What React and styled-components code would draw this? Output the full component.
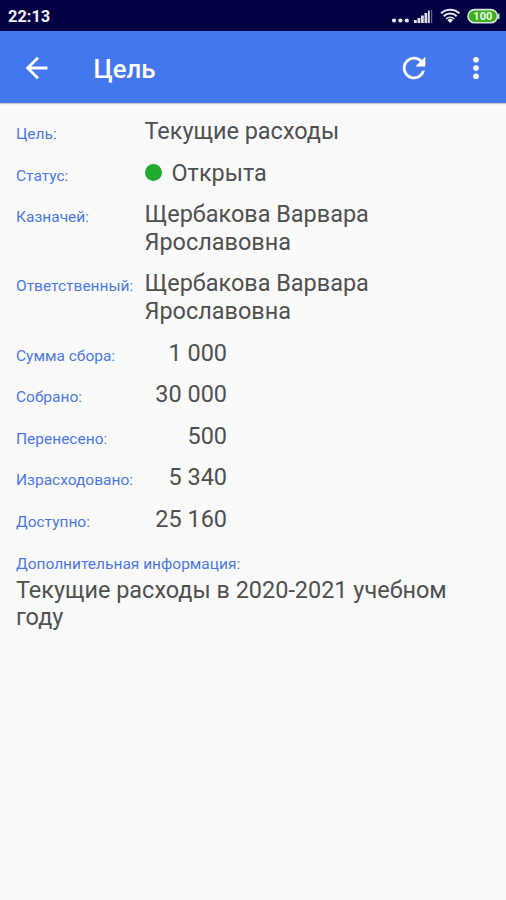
import React from 'react';
import styled, { createGlobalStyle } from 'styled-components';

const navy = '#000042';
const blue = '#4477ee';
const label = '#4a78ec';
const grey = '#505050';

const GlobalStyle = createGlobalStyle`
  body {
    margin: 0;
    background: #fafafa;
    font-family: Roboto, 'Noto Sans', sans-serif;
  }
`;

const Screen = styled.div`
  min-height: 900px;
  background: #fafafa;
`;

const StatusBar = styled.div`
  box-sizing: border-box;
  height: 31px;
  padding: 2px 6px 0 8px;
  display: flex;
  align-items: center;
  justify-content: space-between;
  background: ${navy};
`;

const Clock = styled.span`
  font-size: 16.4px;
  font-weight: 700;
  line-height: 20px;
  color: #f0f0f6;
`;

const StatusIcons = styled.svg`
  display: block;
  width: 110px;
  height: 20px;
`;

const Toolbar = styled.header`
  box-sizing: border-box;
  height: 72px;
  padding: 2px 13px 0 20px;
  display: flex;
  align-items: center;
  background: ${blue};
  box-shadow: 0 1px 1px rgba(0, 0, 0, 0.2);
`;

const Title = styled.h1`
  flex: 1;
  margin: 0 0 0 39.5px;
  padding-top: 1px;
  font-size: 25.8px;
  font-weight: 500;
  line-height: 32px;
  color: #ffffff;
`;

const IconButton = styled.button`
  width: 34px;
  height: 34px;
  margin-left: ${({ gap }) => gap || 0}px;
  padding: 0;
  border: 0;
  background: none;
  color: #ffffff;
  svg {
    display: block;
    width: 34px;
    height: 34px;
    fill: currentColor;
  }
`;

const Details = styled.main`
  padding: 15px 16px 0;
  display: flex;
  flex-direction: column;
  row-gap: 14.15px;
`;

const Row = styled.div`
  display: grid;
  grid-template-columns: 128.5px 1fr;
  align-items: baseline;
`;

const Label = styled.span`
  font-size: 15.5px;
  line-height: 18px;
  white-space: nowrap;
  color: ${label};
`;

const Value = styled.div`
  font-size: 23.45px;
  line-height: 27.5px;
  color: ${grey};
  ${({ wrapAt }) => (wrapAt ? `max-width: ${wrapAt}px;` : '')}
`;

const Amount = styled(Value)`
  width: 82.5px;
  text-align: right;
  white-space: nowrap;
`;

const Dot = styled.span`
  display: inline-block;
  width: 17px;
  height: 17px;
  margin-right: 10px;
  border-radius: 50%;
  background: #23ab30;
`;

const Note = styled.section`
  display: flex;
  flex-direction: column;
  row-gap: 4px;
  padding-top: 7px;
`;

const people = [
  { title: 'Казначей:', name: 'Щербакова Варвара Ярославовна' },
  { title: 'Ответственный:', name: 'Щербакова Варвара Ярославовна' },
];

const amounts = [
  { title: 'Сумма сбора:', sum: '1 000' },
  { title: 'Собрано:', sum: '30 000' },
  { title: 'Перенесено:', sum: '500' },
  { title: 'Израсходовано:', sum: '5 340' },
  { title: 'Доступно:', sum: '25 160' },
];

const SystemIcons = () => (
  <StatusIcons viewBox="390 7 110 20">
    <g fill="#f0f0f6">
      <circle cx="394" cy="20.5" r="2.1" />
      <circle cx="400.4" cy="20.5" r="2.1" />
      <circle cx="406.8" cy="20.5" r="2.1" />
      <g fill="#dcdce6">
        <rect x="414" y="20" width="2.8" height="3" />
        <rect x="417.5" y="18" width="2.8" height="5" />
        <rect x="421" y="15.5" width="2.8" height="7.5" />
        <rect x="424.5" y="13" width="2.8" height="10" />
        <rect x="428" y="10.5" width="1.8" height="12.5" />
      </g>
      <rect x="431" y="10" width="1.2" height="13" fill="#66668a" />
      <path d="M447.4 19.9a4.2 4.2 0 0 1 5.6 0L450.2 23z" />
    </g>
    <g fill="none" stroke="#e6e6ee" strokeWidth="2">
      <path d="M441 13.4a13.2 13.2 0 0 1 18.4 0" />
      <path d="M443.7 16.2a9.2 9.2 0 0 1 13 0" />
      <path d="M446.1 18.9a5.8 5.8 0 0 1 8.2 0" strokeWidth="1.5" />
    </g>
    <rect x="468" y="9.6" width="29.4" height="13.2" rx="6.6" fill="#37b11c" stroke="#d8e6dc" strokeWidth="1.6" />
    <path d="M498.8 13.5v5.4" stroke="#d8e6dc" strokeWidth="1.4" />
    <text x="482.8" y="20.2" textAnchor="middle" fontSize="11" fontWeight="700" fill="#f2fbe8">100</text>
  </StatusIcons>
);

const App = () => (
  <>
    <GlobalStyle />
    <Screen>
      <StatusBar>
        <Clock>22:13</Clock>
        <SystemIcons />
      </StatusBar>
      <Toolbar>
        <IconButton aria-label="Назад">
          <svg viewBox="0 0 24 24">
            <path d="M19.4 11H7.83l5.59-5.59L12 4l-8 8 8 8 1.41-1.41L7.83 13H19.4v-2z" />
          </svg>
        </IconButton>
        <Title>Цель</Title>
        <IconButton aria-label="Обновить">
          <svg viewBox="0 0 24 24">
            <path d="M17.65 6.35A7.958 7.958 0 0 0 12 4a8 8 0 1 0 7.73 10h-2.08A6 6 0 1 1 12 6c1.66 0 3.14.69 4.22 1.78L13 11h7V4l-2.35 2.35z" />
          </svg>
        </IconButton>
        <IconButton gap={28} aria-label="Меню">
          <svg viewBox="0 0 24 24">
            <circle cx="12" cy="6.2" r="2" />
            <circle cx="12" cy="12" r="2" />
            <circle cx="12" cy="17.8" r="2" />
          </svg>
        </IconButton>
      </Toolbar>
      <Details>
        <Row>
          <Label>Цель:</Label>
          <Value>Текущие расходы</Value>
        </Row>
        <Row>
          <Label>Статус:</Label>
          <Value><Dot />Открыта</Value>
        </Row>
        {people.map(item => (
          <Row key={item.title}>
            <Label>{item.title}</Label>
            <Value wrapAt={300}>{item.name}</Value>
          </Row>
        ))}
        {amounts.map(item => (
          <Row key={item.title}>
            <Label>{item.title}</Label>
            <Amount>{item.sum}</Amount>
          </Row>
        ))}
        <Note>
          <Label>Дополнительная информация:</Label>
          <Value>Текущие расходы в 2020-2021 учебном году</Value>
        </Note>
      </Details>
    </Screen>
  </>
);

export default App;
